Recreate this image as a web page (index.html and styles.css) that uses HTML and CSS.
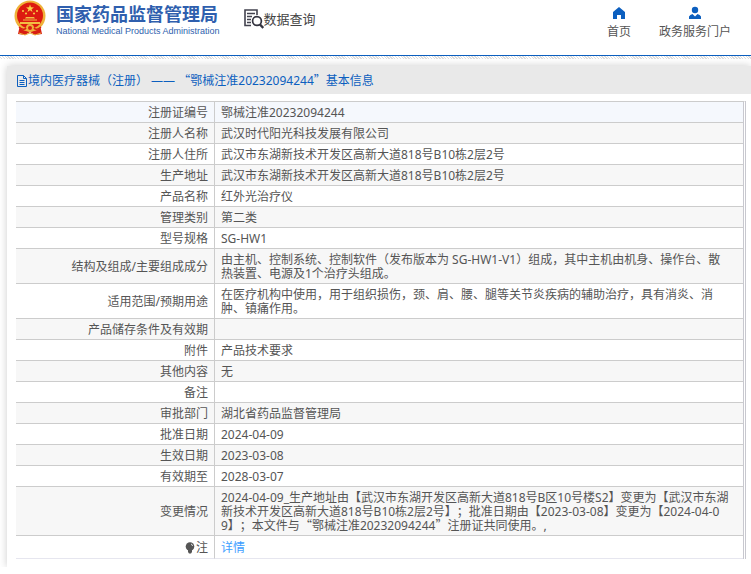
FILE: index.html
```html
<!DOCTYPE html>
<html lang="zh-CN">
<head>
    <meta charset="UTF-8">
    <meta name="viewport" content="width=device-width, initial-scale=1.0">
    <title>国家药品监督管理局 数据查询</title>
    <link rel="stylesheet" href="styles.css">
</head>
<body>
    <header class="header">
        <a class="brand" href="#">
            <svg class="emblem" viewBox="0 0 32 36" aria-hidden="true">
                <path d="M6 25 L4 34 L11 35 L16 32 L21 35 L28 34 L26 25 Z" fill="#d81e13"/>
                <path d="M5 33 L11 35 L16 33 L21 35 L27 33" fill="none" stroke="#e9b23c" stroke-width="1"/>
                <circle cx="16" cy="16" r="15.5" fill="#efb23a"/>
                <circle cx="16" cy="15.5" r="13" fill="#dd1a10"/>
                <path d="M16 4.5 L17 7.3 L20 7.4 L17.6 9.2 L18.5 12 L16 10.3 L13.5 12 L14.4 9.2 L12 7.4 L15 7.3 Z" fill="#f8d34a"/>
                <circle cx="9" cy="11" r="1.1" fill="#f5c544"/>
                <circle cx="23" cy="11" r="1.1" fill="#f5c544"/>
                <circle cx="12" cy="13.5" r="1.1" fill="#f5c544"/>
                <circle cx="20" cy="13.5" r="1.1" fill="#f5c544"/>
                <path d="M12 17 H20 L21 18.500 H11 Z M9 19.500 H23 V20.500 H9 Z M6 22 H26 V24 H6 Z" fill="#f3bd43"/>
                <circle cx="16" cy="28" r="4" fill="#efb23a"/>
                <circle cx="16" cy="28" r="2" fill="#d81e13"/>
                <path d="M5 27 Q10 31 12 28 M27 27 Q22 31 20 28" fill="none" stroke="#d81e13" stroke-width="1.5"/>
            </svg>
            <span class="brand-text">
                <span class="brand-cn">国家药品监督管理局</span>
                <span class="brand-en">National Medical Products Administration</span>
            </span>
        </a>
        <a class="query" href="#">
            <svg class="query-icon" viewBox="0 0 20 20" aria-hidden="true">
                <path d="M7 16.5 H1 V1 H13 V6" fill="none" stroke="#43434f" stroke-width="1.6"/>
                <path d="M3 4.5 H11 M3 7.5 H8 M3 10.5 H7 M3 13.5 H7" stroke="#43434f" stroke-width="1.3"/>
                <circle cx="13" cy="12" r="4.4" fill="none" stroke="#33333f" stroke-width="1.7"/>
                <path d="M16 15.5 L19.3 19" stroke="#33333f" stroke-width="2.4"/>
            </svg>
            <span>数据查询</span>
        </a>
        <nav class="nav">
            <a href="#">
                <svg class="nav-icon" viewBox="0 0 14 14" aria-hidden="true">
                    <path d="M7 1 L13 6 V13 H9 V9 H5 V13 H1 V6 Z" fill="#0c5fbf"/>
                </svg>
                <span>首页</span>
            </a>
            <a href="#">
                <svg class="nav-icon" viewBox="0 0 14 14" aria-hidden="true">
                    <circle cx="7" cy="4" r="3.2" fill="#0c5fbf"/>
                    <path d="M1 13 V10.500 Q2 8.500 4.500 8 L7 10.500 L9.500 8 Q12 8.500 13 10.500 V13 Z" fill="#0c5fbf"/>
                </svg>
                <span>政务服务门户</span>
            </a>
        </nav>
    </header>
    <div class="stripe"></div>

    <main class="card">
        <h1 class="title">
            <svg class="doc-icon" viewBox="0 0 12 12" aria-hidden="true">
                <path d="M1.500 0.500 H7.500 L10.500 3.500 V11.500 H1.500 Z M7.500 0.500 V3.500 H10.500 M3.500 5.500 H8.500 M3.500 7.500 H8.500 M3.500 9.500 H8.500" fill="none" stroke="#0c5fbf"/>
            </svg>
            <span>境内医疗器械（注册） —— <span class="cjk">“</span>鄂械注准20232094244<span class="cjk">”</span>基本信息</span>
        </h1>
        <div class="content">
            <table class="info">
                <tbody>
                    <tr class="first"><th scope="row">注册证编号</th><td>鄂械注准20232094244</td></tr>
                    <tr><th scope="row">注册人名称</th><td>武汉时代阳光科技发展有限公司</td></tr>
                    <tr><th scope="row">注册人住所</th><td>武汉市东湖新技术开发区高新大道818号B10栋2层2号</td></tr>
                    <tr><th scope="row">生产地址</th><td>武汉市东湖新技术开发区高新大道818号B10栋2层2号</td></tr>
                    <tr><th scope="row">产品名称</th><td>红外光治疗仪</td></tr>
                    <tr><th scope="row">管理类别</th><td>第二类</td></tr>
                    <tr><th scope="row">型号规格</th><td>SG-HW1</td></tr>
                    <tr><th scope="row">结构及组成/主要组成成分</th><td>由主机、控制系统、控制软件（发布版本为 SG-HW1-V1）组成，其中主机由机身、操作台、散热装置、电源及1个治疗头组成。</td></tr>
                    <tr><th scope="row">适用范围/预期用途</th><td>在医疗机构中使用，用于组织损伤，颈、肩、腰、腿等关节炎疾病的辅助治疗，具有消炎、消肿、镇痛作用。</td></tr>
                    <tr><th scope="row">产品储存条件及有效期</th><td></td></tr>
                    <tr><th scope="row">附件</th><td>产品技术要求</td></tr>
                    <tr><th scope="row">其他内容</th><td>无</td></tr>
                    <tr><th scope="row">备注</th><td></td></tr>
                    <tr><th scope="row">审批部门</th><td>湖北省药品监督管理局</td></tr>
                    <tr><th scope="row">批准日期</th><td>2024-04-09</td></tr>
                    <tr><th scope="row">生效日期</th><td>2023-03-08</td></tr>
                    <tr><th scope="row">有效期至</th><td>2028-03-07</td></tr>
                    <tr><th scope="row">变更情况</th><td>2024-04-09_生产地址由【武汉市东湖开发区高新大道818号B区10号楼S2】变更为【武汉市东湖新技术开发区高新大道818号B10栋2层2号】；批准日期由【2023-03-08】变更为【2024-04-0<br>9】；本文件与<span class="cjk">“</span>鄂械注准20232094244<span class="cjk">”</span>注册证共同使用。,</td></tr>
                    <tr class="last">
                        <th scope="row"><svg class="bulb" viewBox="0 0 10 12" aria-hidden="true">
                            <circle cx="5" cy="4.500" r="4.300" fill="#555"/>
                            <path d="M3 8 H7 V10 L6 11.500 H4 L3 10 Z" fill="#555"/>
                            <path d="M6 2 Q7.500 2.500 7.500 4" fill="none" stroke="#ddd"/>
                        </svg>注</th>
                        <td><a href="#">详情</a></td>
                    </tr>
                </tbody>
            </table>
        </div>
    </main>
</body>
</html>
```
FILE: styles.css
```css
* {
    box-sizing: border-box;
}
body {
    margin: 0;
    font-family: "Noto Sans", "Noto Sans CJK SC", sans-serif;
    font-size: 12px;
    color: #555;
    background: #fff;
    text-spacing-trim: space-all;
}
a {
    color: inherit;
    text-decoration: none;
}
.cjk {
    font-family: "Noto Sans CJK SC", sans-serif;
    line-height: 12px;
}
.header {
    display: flex;
    align-items: flex-start;
    height: 56px;
    padding: 0 20px 0 14px;
    border-bottom: 1px solid #0c5fbf;
}
.brand {
    display: flex;
    gap: 10px;
    color: #2f5fae;
}
.emblem {
    width: 32px;
    height: 36px;
}
.brand-text {
    display: flex;
    flex-direction: column;
    padding-top: 4px;
}
.brand-cn {
    font-size: 18px;
    font-weight: bold;
    line-height: 20px;
}
.brand-en {
    font-family: "Liberation Sans", Arial, sans-serif;
    font-size: 9px;
    line-height: 14px;
}
.query {
    display: flex;
    align-items: center;
    margin-left: 24px;
    padding-top: 9px;
    font-size: 13px;
    line-height: 20px;
    color: #444;
}
.query-icon {
    width: 20px;
    height: 20px;
}
.nav {
    display: flex;
    gap: 28px;
    margin-left: auto;
    padding-top: 6px;
}
.nav a {
    display: flex;
    flex-direction: column;
    align-items: center;
    gap: 2px;
    line-height: 20px;
}
.nav-icon {
    width: 14px;
    height: 14px;
}
.stripe {
    height: 3px;
    background: repeating-linear-gradient(45deg, #fff 0 1px, #ddd 1px 2px);
}
.card {
    margin: 7px 0 0 7px;
    background: #fff;
    box-shadow: 0 0 8px rgba(0, 0, 0, 0.2);
}
.title {
    display: flex;
    align-items: center;
    height: 28px;
    margin: 0;
    padding: 2px 0 0 9px;
    font-size: 12px;
    font-weight: normal;
    line-height: 20px;
    color: #0c5fbf;
    background: #e9e9e9;
}
.doc-icon {
    width: 12px;
    height: 12px;
}
.content {
    padding: 7px 5px 8px 9px;
}
.info {
    width: 100%;
    border-collapse: separate;
    border-spacing: 0;
    border-top: 1px solid #ccc;
    border-right: 3px double #c8c8cf;
}
.info th,
.info td {
    height: 21px;
    padding: 4px 6px 2px;
    line-height: 14px;
    border-bottom: 1px solid #ccc;
}
.info th {
    width: 199px;
    font-weight: normal;
    text-align: right;
    border-right: 1px solid #ccc;
}
.info td {
    padding-right: 12px;
    text-align: left;
}
.info tr:nth-child(even) {
    background: #f7f7f7;
}
.info .first {
    background: #f5f8fd;
}
.info .last th,
.info .last td {
    height: 23px;
    border-bottom-color: #e6e6ef;
}
.info .last a {
    color: #409eff;
}
.bulb {
    width: 10px;
    height: 12px;
    margin-right: 1px;
    vertical-align: -2px;
}
```
